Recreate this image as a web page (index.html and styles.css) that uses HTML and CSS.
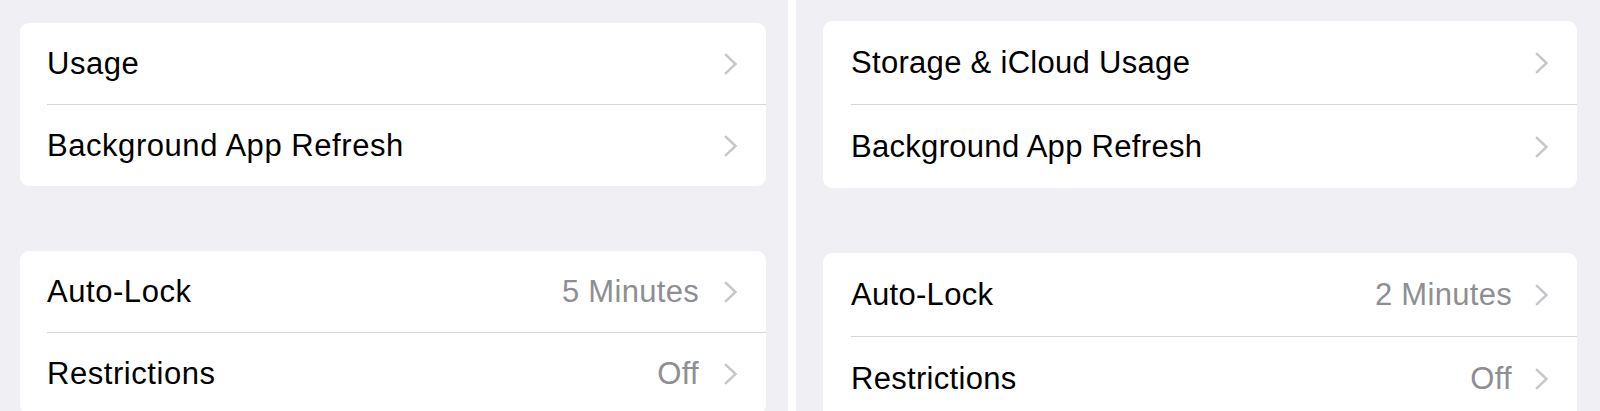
FILE: index.html
```html
<!DOCTYPE html>
<html lang="en">
<head>
<meta charset="utf-8">
<title>Settings</title>
<link rel="stylesheet" href="styles.css">
</head>
<body>
<div class="screens">
  <section class="panel panel-left">
    <div class="card card-first">
      <div class="row"><span class="label">Usage</span><span class="value"></span><svg class="chev" viewBox="0 0 14 22"><polyline points="2,2 11.5,11 2,20"/></svg></div>
      <div class="row"><span class="label">Background App Refresh</span><span class="value"></span><svg class="chev" viewBox="0 0 14 22"><polyline points="2,2 11.5,11 2,20"/></svg></div>
    </div>
    <div class="card">
      <div class="row"><span class="label">Auto-Lock</span><span class="value">5 Minutes</span><svg class="chev" viewBox="0 0 14 22"><polyline points="2,2 11.5,11 2,20"/></svg></div>
      <div class="row"><span class="label">Restrictions</span><span class="value">Off</span><svg class="chev" viewBox="0 0 14 22"><polyline points="2,2 11.5,11 2,20"/></svg></div>
    </div>
  </section>
  <section class="panel panel-right">
    <div class="card card-first">
      <div class="row"><span class="label">Storage &amp; iCloud Usage</span><span class="value"></span><svg class="chev" viewBox="0 0 14 22"><polyline points="2,2 11.5,11 2,20"/></svg></div>
      <div class="row"><span class="label">Background App Refresh</span><span class="value"></span><svg class="chev" viewBox="0 0 14 22"><polyline points="2,2 11.5,11 2,20"/></svg></div>
    </div>
    <div class="card">
      <div class="row"><span class="label">Auto-Lock</span><span class="value">2 Minutes</span><svg class="chev" viewBox="0 0 14 22"><polyline points="2,2 11.5,11 2,20"/></svg></div>
      <div class="row"><span class="label">Restrictions</span><span class="value">Off</span><svg class="chev" viewBox="0 0 14 22"><polyline points="2,2 11.5,11 2,20"/></svg></div>
    </div>
  </section>
</div>
</body>
</html>
```

FILE: styles.css
```css
html, body {
  margin: 0;
  padding: 0;
  background: #efeff4;
  height: 411px;
  overflow: hidden;
}

body {
  font-family: "Liberation Sans", Arial, Helvetica, sans-serif;
  color: #000;
}

.screens {
  display: grid;
  grid-template-columns: 788px 1fr;
  height: 411px;
}

.panel {
  display: flex;
  flex-direction: column;
  gap: 65px;
  background: #efeff4;
}

.panel-left {
  padding: 23px 22px 0 20px;
}

.panel-right {
  border-left: 8px solid #ffffff;
  padding: 21px 23px 0 27px;
}

.card {
  background: #fff;
  border-radius: 9px;
  display: flex;
  flex-direction: column;
}

.row {
  display: flex;
  align-items: center;
  height: 81px;
  padding: 0 28px 0 27px;
  font-size: 31px;
}

.panel-right .row {
  height: 83px;
  padding-left: 28px;
}

.row + .row {
  border-top: 1px solid #d6d6da;
  margin-left: 27px;
  padding-left: 0;
}

.panel-right .row + .row {
  margin-left: 28px;
  padding-left: 0;
}

.label {
  flex: 1;
  white-space: nowrap;
  letter-spacing: 0.55px;
}

.panel-right .label {
  letter-spacing: 0.3px;
}

.value {
  color: #8e8e93;
  margin-right: 25px;
  white-space: nowrap;
  letter-spacing: 0.3px;
}

.panel-right .value {
  margin-right: 23px;
}

.chev {
  width: 14px;
  height: 22px;
  flex: none;
}

.chev polyline {
  fill: none;
  stroke: #c7c7cc;
  stroke-width: 2.5;
  stroke-linecap: square;
  stroke-linejoin: miter;
}
```
